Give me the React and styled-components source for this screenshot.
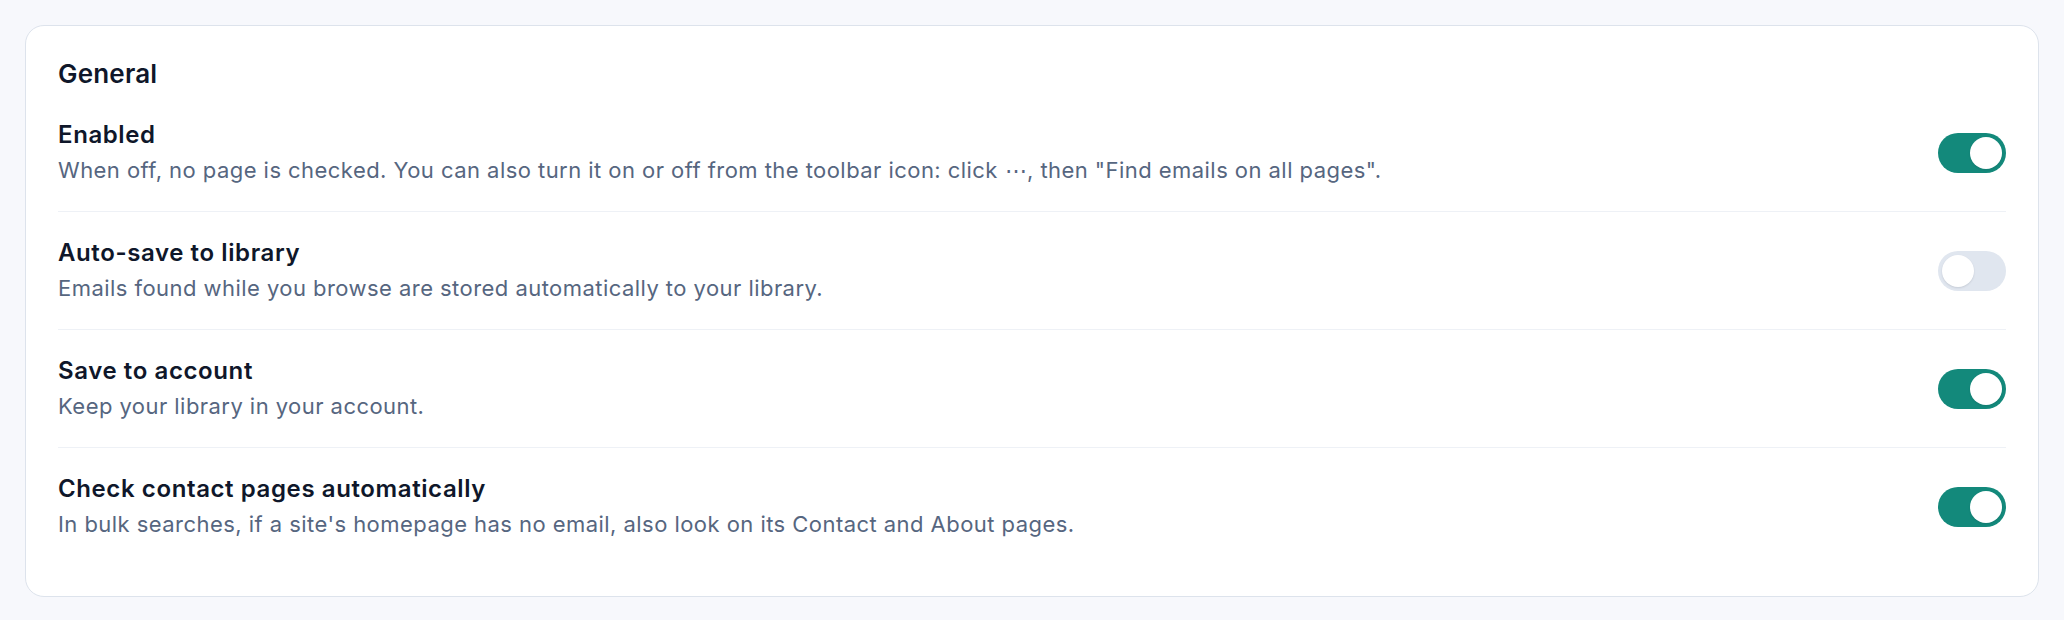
import { useState } from "react";
import styled, { createGlobalStyle } from "styled-components";

const GlobalStyle = createGlobalStyle`
  html, body {
    margin: 0;
    padding: 0;
    background: #f7f8fc;
  }
  body {
    font-family: Inter, "Noto Sans", "Liberation Sans", sans-serif;
    -webkit-font-smoothing: antialiased;
  }
`;

const settingsList = [
  {
    id: "enabled",
    title: "Enabled",
    text: 'When off, no page is checked. You can also turn it on or off from the toolbar icon: click \u22EF, then "Find emails on all pages".',
    on: true,
  },
  {
    id: "autosave",
    title: "Auto-save to library",
    text: "Emails found while you browse are stored automatically to your library.",
    on: false,
  },
  {
    id: "account",
    title: "Save to account",
    text: "Keep your library in your account.",
    on: true,
  },
  {
    id: "contact",
    title: "Check contact pages automatically",
    text: "In bulk searches, if a site's homepage has no email, also look on its Contact and About pages.",
    on: true,
  },
];

export default function App() {
  const [values, setValues] = useState(
    Object.fromEntries(settingsList.map((s) => [s.id, s.on]))
  );

  function flip(id) {
    setValues({ ...values, [id]: !values[id] });
  }

  return (
    <>
      <GlobalStyle />
      <Page>
        <Card>
          <SectionTitle>General</SectionTitle>
          {settingsList.map((s) => (
            <Row key={s.id}>
              <Info>
                <RowTitle>{s.title}</RowTitle>
                <RowText>{s.text}</RowText>
              </Info>
              <Switch
                role="switch"
                aria-checked={values[s.id]}
                aria-label={s.title}
                $on={values[s.id]}
                onClick={() => flip(s.id)}
              >
                <Knob $on={values[s.id]} />
              </Switch>
            </Row>
          ))}
        </Card>
      </Page>
    </>
  );
}

const Page = styled.div`
  padding: 25px 25px 23px;
`;

const Card = styled.section`
  background: #ffffff;
  border: 1px solid #dde3ec;
  border-radius: 19px;
  padding: 32px 32px 31px;
`;

const SectionTitle = styled.h2`
  margin: 0 0 4px;
  font-size: 26px;
  line-height: 32px;
  font-weight: 600;
  letter-spacing: 0.2px;
  color: #0f172a;
`;

const Row = styled.div`
  display: flex;
  align-items: center;
  justify-content: space-between;
  gap: 32px;
  padding: 25px 0 25px;
  border-bottom: 1px solid #eef1f6;

  &:last-child {
    border-bottom: none;
  }
`;

const Info = styled.div`
  display: flex;
  flex-direction: column;
  gap: 3px;
`;

const RowTitle = styled.div`
  font-size: 24px;
  line-height: 32px;
  font-weight: 600;
  letter-spacing: 0.6px;
  color: #0f172a;
`;

const RowText = styled.div`
  font-size: 22px;
  line-height: 32px;
  font-weight: 400;
  letter-spacing: 0.45px;
  color: #56667f;
`;

const Switch = styled.button`
  flex: none;
  position: relative;
  width: 68px;
  height: 40px;
  padding: 0;
  border: none;
  border-radius: 20px;
  background: ${(p) => (p.$on ? "#13897b" : "#e0e6ef")};
  cursor: pointer;
`;

const Knob = styled.span`
  position: absolute;
  top: 4px;
  left: ${(p) => (p.$on ? "32px" : "4px")};
  width: 32px;
  height: 32px;
  border-radius: 50%;
  background: #ffffff;
  box-shadow: 0 1px 2px rgba(15, 23, 42, 0.12);
  transition: left 0.15s ease;
`;
